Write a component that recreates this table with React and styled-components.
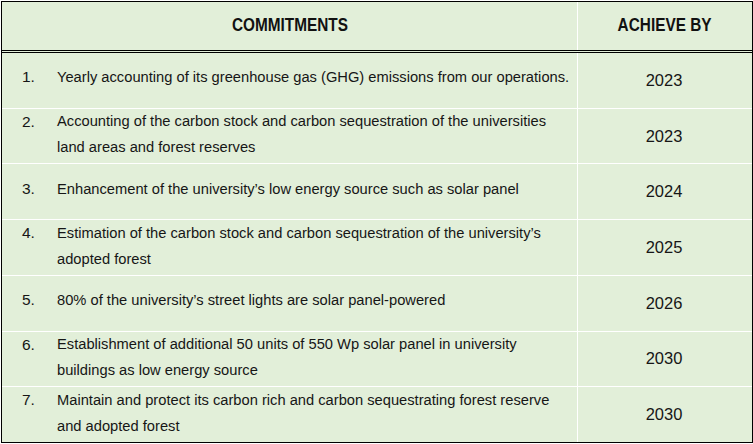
import React from "react";
import styled, { createGlobalStyle } from "styled-components";

const Global = createGlobalStyle`
  html, body { margin: 0; padding: 0; background: #ffffff; }
  body { font-family: "Liberation Sans", Arial, sans-serif; }
`;

const Table = styled.div`
  box-sizing: border-box;
  margin: 1px 0 0 1px;
  width: 752px;
  height: 442px;
  border: 1px solid #000;
  background: #e2efd9;
  display: flex;
  flex-direction: column;
`;

const HeaderRow = styled.div`
  display: grid;
  grid-template-columns: 575px 1fr;
  height: 48px;
  flex: 0 0 auto;
  border-bottom: 3px double #000;
`;

const HeaderCell = styled.div`
  display: flex;
  align-items: center;
  justify-content: center;
  padding-bottom: 2px;
  ${(p) => (p.$divider ? "border-left: 1px solid #ffffff;" : "")}
`;

const HeaderLabel = styled.span`
  display: inline-block;
  font-family: "Liberation Sans", Arial, sans-serif;
  font-weight: 700;
  font-size: 18.5px;
  color: #111;
  white-space: nowrap;
  transform: scaleX(0.83);
`;

const Body = styled.div`
  flex: 1 1 0;
  min-height: 0;
  display: flex;
  flex-direction: column;
`;

const Row = styled.div`
  flex: 1 1 0;
  min-height: 0;
  display: grid;
  grid-template-columns: 575px 1fr;
  grid-template-rows: minmax(0, 1fr);
  ${(p) => (p.$first ? "" : "border-top: 1px solid #ffffff;")}
`;

const CommitCell = styled.div`
  display: flex;
  align-items: center;
  min-height: 0;
  padding: 0 0 ${(p) => (p.$single ? 6 : 4)}px 20px;
  font-size: 14.7px;
  line-height: 26px;
  color: #161616;
`;

const Num = styled.span`
  flex: 0 0 35px;
  align-self: ${(p) => (p.$single ? "center" : "flex-start")};
  font-size: 15.5px;
`;

const Text = styled.span`
  white-space: nowrap;
`;

const YearCell = styled.div`
  display: flex;
  align-items: center;
  justify-content: center;
  min-height: 0;
  border-left: 1px solid #ffffff;
  font-size: 16.5px;
  color: #161616;
  padding-right: 2px;
`;

const rows = [
  { n: "1.", lines: ["Yearly accounting of its greenhouse gas (GHG) emissions from our operations."], y: "2023" },
  { n: "2.", lines: ["Accounting of the carbon stock and carbon sequestration of the universities", "land areas and forest reserves"], y: "2023" },
  { n: "3.", lines: ["Enhancement of the university\u2019s low energy source such as solar panel"], y: "2024" },
  { n: "4.", lines: ["Estimation of the carbon stock and carbon sequestration of the university\u2019s", "adopted forest"], y: "2025" },
  { n: "5.", lines: ["80% of the university\u2019s street lights are solar panel-powered"], y: "2026" },
  { n: "6.", lines: ["Establishment of additional 50 units of 550 Wp solar panel in university", "buildings as low energy source"], y: "2030" },
  { n: "7.", lines: ["Maintain and protect its carbon rich and carbon sequestrating forest reserve", "and adopted forest"], y: "2030" },
];

export default function App() {
  return (
    <>
      <Global />
      <Table>
        <HeaderRow>
          <HeaderCell>
            <HeaderLabel>COMMITMENTS</HeaderLabel>
          </HeaderCell>
          <HeaderCell $divider>
            <HeaderLabel>ACHIEVE BY</HeaderLabel>
          </HeaderCell>
        </HeaderRow>
        <Body>
          {rows.map((r, i) => {
            const single = r.lines.length === 1;
            return (
              <Row key={i} $first={i === 0}>
                <CommitCell $single={single}>
                  <Num $single={single}>{r.n}</Num>
                  <Text>
                    {r.lines.map((l, j) => (
                      <React.Fragment key={j}>
                        {j > 0 && <br />}
                        {l}
                      </React.Fragment>
                    ))}
                  </Text>
                </CommitCell>
                <YearCell>{r.y}</YearCell>
              </Row>
            );
          })}
        </Body>
      </Table>
    </>
  );
}
